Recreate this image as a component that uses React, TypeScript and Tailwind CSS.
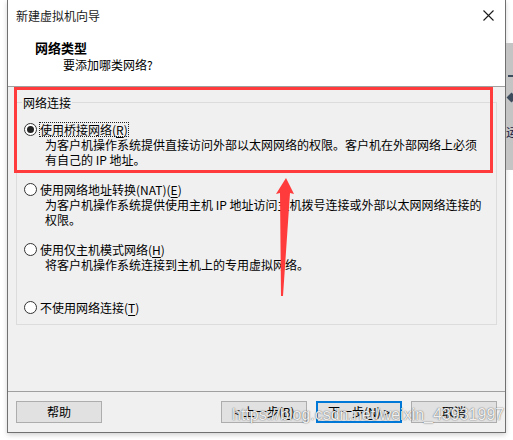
import React from "react";

const FONT = "font-['Noto_Sans_CJK_SC','Microsoft_YaHei',sans-serif]";

function Radio({ checked }: { checked?: boolean }) {
  return (
    <span className="mt-[1px] flex h-[13px] w-[13px] shrink-0 items-center justify-center rounded-full border border-[#333333] bg-white">
      {checked && <span className="h-[7px] w-[7px] rounded-full bg-[#222222]" />}
    </span>
  );
}

function Option({
  label,
  mnemonic,
  desc,
  checked,
  focused,
  className = "",
}: {
  label: string;
  mnemonic: string;
  desc?: React.ReactNode;
  checked?: boolean;
  focused?: boolean;
  className?: string;
}) {
  return (
    <div className={`flex flex-col ${className}`}>
      <div className="flex items-start gap-[2px]">
        <Radio checked={checked} />
        <span
          className={`inline-block whitespace-nowrap border leading-[13px] ${
            focused ? "border-dotted border-[#222222]" : "border-transparent"
          }`}
        >
          {label}(<span className="underline underline-offset-2">{mnemonic}</span>)
        </span>
      </div>
      {desc && <div className="whitespace-nowrap pl-[21px] leading-[15px]">{desc}</div>}
    </div>
  );
}

function Button({ children, primary }: { children: React.ReactNode; primary?: boolean }) {
  return (
    <div
      className={`flex h-[22px] w-[86px] items-center justify-center bg-[#e1e1e1] leading-none ${
        primary ? "border-2 border-[#0078d7]" : "border border-[#adadad]"
      }`}
    >
      {children}
    </div>
  );
}

export default function App() {
  return (
    <div className={`relative flex h-[440px] w-[513px] overflow-hidden bg-white text-[12px] text-[#000000] ${FONT}`}>
      <div className="w-[7px] shrink-0" />

      {/* 向导窗口 */}
      <div className="flex h-[433px] w-[499px] shrink-0 flex-col border-x border-b border-[#707070] bg-white shadow-[0_2px_5px_rgba(0,0,0,0.18)]">
        <div className="flex h-[30px] items-center justify-between pl-[8px] pr-[10px]">
          <span className="leading-[15px] text-[#1a1a1a]">新建虚拟机向导</span>
          <svg width="11" height="11" viewBox="0 0 11 11" className="mr-[1px]">
            <path d="M0.5 0.5 L10.5 10.5 M10.5 0.5 L0.5 10.5" stroke="#1a1a1a" strokeWidth="1.1" />
          </svg>
        </div>

        <div className="flex h-[57px] flex-col border-b border-[#a0a0a0] bg-white pt-[9px]">
          <span className="pl-[27px] text-[13px] font-bold leading-[17px]">网络类型</span>
          <span className="mt-[1px] pl-[55px] leading-[15px]">要添加哪类网络?</span>
        </div>

        <div className="flex h-[304px] flex-col bg-[#f0f0f0] px-[8px] pt-[15px]">
          <div className="relative h-[223px] border border-[#dcdcdc] pl-[7px] pt-[19px]">
            <span className="absolute -top-[8px] left-[5px] bg-[#f0f0f0] px-[1px] leading-[15px]">网络连接</span>
            <Option
              label="使用桥接网络"
              mnemonic="R"
              checked
              focused
              desc={
                <>
                  为客户机操作系统提供直接访问外部以太网网络的权限。客户机在外部网络上必须
                  <br />
                  有自己的 IP 地址。
                </>
              }
            />
            <Option
              className="mt-[15px]"
              label="使用网络地址转换(NAT)"
              mnemonic="E"
              desc={
                <>
                  为客户机操作系统提供使用主机 IP 地址访问主机拨号连接或外部以太网网络连接的
                  <br />
                  权限。
                </>
              }
            />
            <Option className="mt-[15px]" label="使用仅主机模式网络" mnemonic="H" desc="将客户机操作系统连接到主机上的专用虚拟网络。" />
            <Option className="mt-[28px]" label="不使用网络连接" mnemonic="T" />
          </div>
        </div>

        <div className="flex flex-1 items-start border-t border-[#a0a0a0] bg-[#f0f0f0] px-[8px] pt-[9px]">
          <Button>帮助</Button>
          <div className="ml-auto flex gap-[9px]">
            <Button>
              &lt; 上一步(<span className="underline underline-offset-2">B</span>)
            </Button>
            <Button primary>
              下一步(<span className="underline underline-offset-2">N</span>) &gt;
            </Button>
            <Button>取消</Button>
          </div>
        </div>
      </div>

      {/* 窗口后面的桌面 */}
      <div className="flex w-[7px] shrink-0 flex-col">
        <div className="mt-[43px] flex h-[127px] flex-col overflow-hidden bg-[#c4c4c4]">
          <div className="ml-[2px] mt-[32px] h-[2px] w-[6px] bg-[#3d4b5c]" />
          <div className="ml-[2px] mt-[17px] h-[7px] w-[7px] rotate-45 bg-[#3d4b5c]" />
          <span className="mt-[23px] whitespace-nowrap leading-[15px] text-[#222244]">运</span>
        </div>
      </div>

      {/* 红色标注框 */}
      <div className="absolute left-[14px] top-[87px] h-[86px] w-[479px] border-[3px] border-[#ff3b3b]" />

      {/* 红色箭头 */}
      <svg className="absolute left-[270px] top-[170px]" width="30" height="130" viewBox="0 0 30 130">
        <polygon points="16,8 24,24 20,23 13,126 11,126 10,23 6,24" fill="#ff3b3b" />
      </svg>

      {/* 水印 */}
      <span className="absolute left-[232px] top-[406px] whitespace-nowrap font-['Liberation_Sans',Arial,sans-serif] text-[16px] leading-[18px] text-white/90 [text-shadow:0_0_1px_rgba(0,0,0,0.6),0_0_2px_rgba(0,0,0,0.25)]">
        https://blog.csdn.net/weixin_43931997
      </span>
    </div>
  );
}
